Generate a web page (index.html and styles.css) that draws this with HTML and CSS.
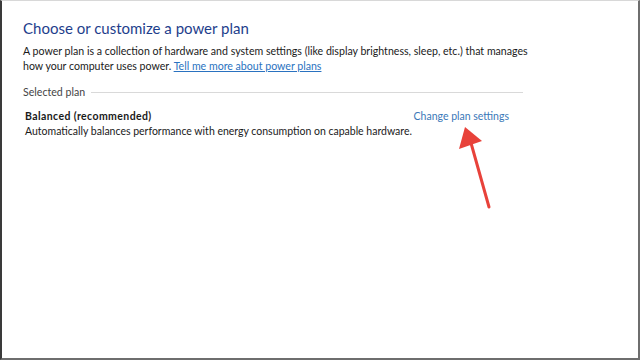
FILE: index.html
```html
<!DOCTYPE html>
<html>
<head>
<meta charset="utf-8">
<link rel="stylesheet" href="styles.css">
</head>
<body>
<div class="frame">
  <div class="content">
    <h1 class="title">Choose or customize a power plan</h1>
    <p class="intro">A power plan is a collection of hardware and system settings (like display brightness, sleep, etc.) that manages<br>how your computer uses power. <a class="link" href="#">Tell me more about power plans</a></p>
    <div class="group">
      <span class="group-label">Selected plan</span>
      <span class="group-rule"></span>
    </div>
    <div class="plan">
      <div class="plan-head">
        <span class="plan-name">Balanced (recommended)</span>
        <a class="plan-link" href="#">Change plan settings</a>
      </div>
      <div class="plan-desc">Automatically balances performance with energy consumption on capable hardware.</div>
    </div>
  </div>
  <svg class="arrow" width="60" height="100" viewBox="440 120 60 100">
    <line x1="489" y1="207" x2="471" y2="143" stroke="#e8423a" stroke-width="3" stroke-linecap="round"/>
    <polygon points="465,127 459,149 482,141" fill="#e8423a"/>
  </svg>
</div>
</body>
</html>
```

FILE: styles.css
```css
html, body {
  margin: 0;
  padding: 0;
  background: #fff;
}
.frame {
  position: relative;
  box-sizing: border-box;
  width: 640px;
  height: 360px;
  border-left: 2px solid #3a3a3a;
  border-top: 1px solid #d8d8d8;
  border-right: 2px solid #6e6e6e;
  border-bottom: 2px solid #6e6e6e;
  font-family: Lato, "Noto Sans", sans-serif;
  color: #1a1a1a;
  overflow: hidden;
}
.content {
  padding: 17px 0 0 21px;
  width: 500px;
}
.title {
  margin: 0;
  font-size: 15px;
  font-weight: normal;
  color: #1e3e8c;
  line-height: 20px;
}
.intro {
  margin: 6px 0 0 0;
  font-size: 10.6px;
  line-height: 15px;
  width: 560px;
  white-space: nowrap;
}
.link {
  color: #2a72c0;
  text-decoration: underline;
}
.group {
  display: flex;
  align-items: center;
  margin-top: 11px;
  gap: 6px;
}
.group-label {
  font-size: 10.6px;
  color: #444;
  line-height: 15px;
}
.group-rule {
  flex: 1;
  height: 1px;
  background: #d9d9d9;
}
.plan {
  margin: 9px 0 0 2px;
  font-size: 10.5px;
  line-height: 15px;
}
.plan-head {
  display: flex;
  justify-content: space-between;
  padding-right: 14px;
}
.plan-name {
  font-weight: bold;
  letter-spacing: 0.4px;
}
.plan-link {
  color: #3a78b8;
  text-decoration: none;
}
.arrow {
  position: absolute;
  left: 438px;
  top: 119px;
}
```
